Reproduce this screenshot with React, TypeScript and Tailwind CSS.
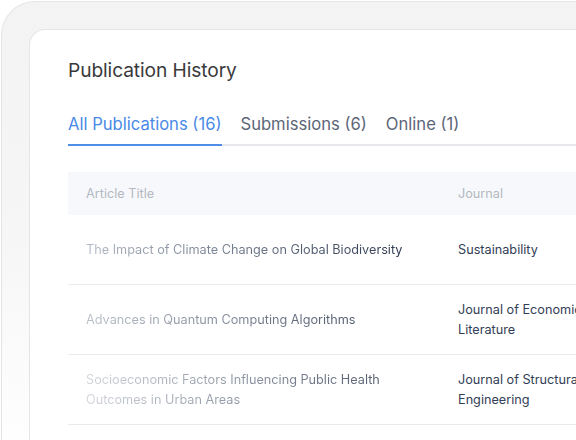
const rows = [
  {
    title: "The Impact of Climate Change on Global Biodiversity",
    journal: "Sustainability",
    fade: "from-[#b4bac5] to-[#2c384f]",
  },
  {
    title: "Advances in Quantum Computing Algorithms",
    journal: "Journal of Economic Literature",
    fade: "from-[#bcc1ca] to-[#3c475c]",
  },
  {
    title: "Socioeconomic Factors Influencing Public Health Outcomes in Urban Areas",
    journal: "Journal of Structural Engineering",
    fade: "from-[#d3d6dc] to-[#4b5568]",
  },
];

export default function App() {
  return (
    <div
      className="w-[576px] h-[440px] overflow-hidden bg-white pl-px pt-px"
      style={{ fontFamily: "Inter, 'Noto Sans', sans-serif" }}
    >
      {/* outer frame */}
      <div className="h-[460px] w-[620px] rounded-tl-[34px] border-l border-t border-[#e4e5e8] bg-gradient-to-b from-[#f3f3f4] via-[#f6f6f7] to-white pl-[27px] pt-[27px]">
        {/* card */}
        <div className="h-[440px] rounded-tl-[16px] border-l border-t border-[#e3e5e9] bg-white pl-[38px] pt-[28px]">
          <h2 className="text-[19.2px] leading-[24px] text-[#3a3a3c] tracking-[-0.1px]">
            Publication History
          </h2>

          {/* tabs */}
          <div className="mt-[30px] flex gap-[19px] border-b-2 border-[#e6e8ec] text-[16.6px] leading-[24px]">
            <div className="-mb-[2px] border-b-2 border-[#4f8ee6] pb-[8px] text-[#4a8ae6]">
              All Publications (16)
            </div>
            <div className="pb-[8px] text-[#5d6678]">Submissions (6)</div>
            <div className="pb-[8px] text-[#5d6678]">Online (1)</div>
          </div>

          {/* table */}
          <div className="mt-[26px] text-[12.7px]">
            <div className="flex h-[43px] items-center bg-[#f7f8fb] text-[#b3b8c2]">
              <div className="w-[390px] pl-[18px]">Article Title</div>
              <div>Journal</div>
            </div>
            {rows.map((r) => (
              <div
                key={r.title}
                className="flex h-[70px] items-center border-b border-[#e9ebef] leading-[20px]"
              >
                <div className="w-[390px] pl-[18px]">
                  <div
                    className={`w-[320px] bg-gradient-to-r ${r.fade} bg-clip-text text-transparent`}
                  >
                    {r.title}
                  </div>
                </div>
                <div className="w-[130px] text-[#323e56]">{r.journal}</div>
              </div>
            ))}
          </div>
        </div>
      </div>
    </div>
  );
}
